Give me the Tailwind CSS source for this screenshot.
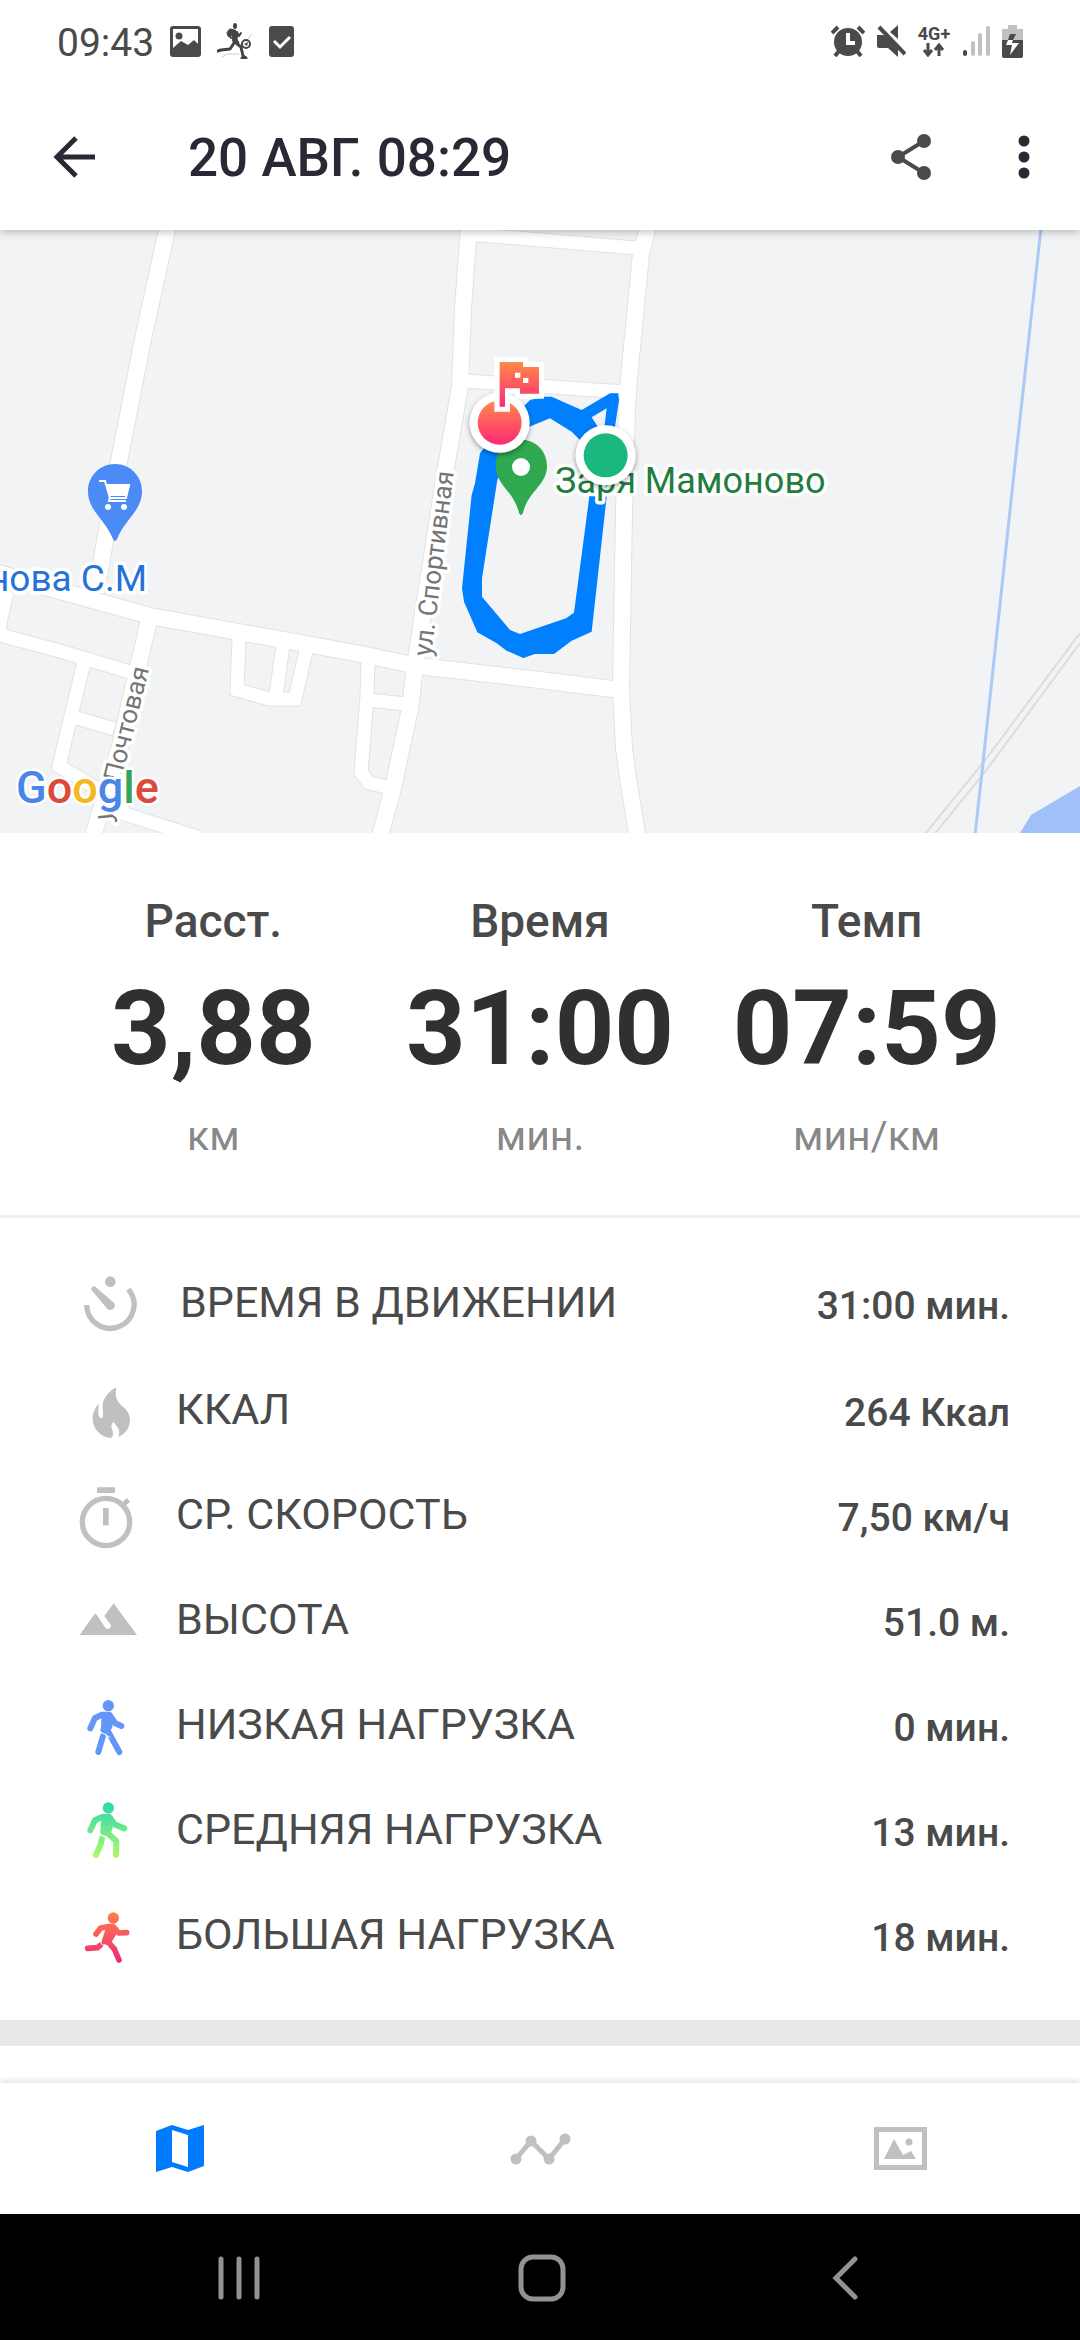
<!DOCTYPE html>
<html lang="ru">

<head>
  <meta charset="UTF-8" />
  <meta name="viewport" content="width=device-width, initial-scale=1.0" />
  <title>20 АВГ. 08:29</title>
  <script src="https://cdn.jsdelivr.net/npm/@tailwindcss/browser@4"></script>
</head>

<body class="min-h-screen flex flex-col bg-white text-[#4a4a4a] font-[Roboto,'Noto_Sans',sans-serif]">
  <!-- status bar -->
  <div class="relative z-20 bg-white h-20 pl-[57px] pr-[57px] pt-[2px] flex items-center justify-between">
    <div class="flex items-center gap-4">
      <span class="text-[39px] leading-10 mt-1">09:43</span>
      <svg class="w-[31px] h-[31px]" viewBox="0 0 31 31">
        <rect width="31" height="31" rx="3" fill="#4a4a4a" />
        <path d="M3 3H28V18L24 14L18 19L11 15L3 22Z" fill="#fff" />
        <circle cx="9" cy="10" r="3.5" fill="#4a4a4a" />
      </svg>
      <svg class="w-9 h-9" viewBox="0 0 36 36" fill="none" stroke="#444" stroke-linecap="round" stroke-linejoin="round">
        <path d="M5 34L10 31H22M31 16L35 11" stroke="#ccc" stroke-width="1" />
        <ellipse cx="18" cy="3" rx="2" ry="3" fill="#444" stroke="none" />
        <path d="M13 6L18 7L21 10L20 16L22 20L16 19L15 13L14 11L13 14L11 13L10 10Z" fill="#444" stroke-width="1" />
        <path d="M12 12L14 15M20 9L22 13L24 10" stroke-width="2" />
        <path d="M18 19L24 24L26 33L29 35H25" stroke-width="3" />
        <path d="M17 20L13 26L4 27L1 28" stroke-width="3" />
        <circle cx="29" cy="21" r="4" stroke-width="2" />
        <path d="M27 21L31 19L30 23Z" fill="#444" stroke="none" />
      </svg>
      <svg class="w-[26px] h-[31px]" viewBox="0 0 26 31">
        <rect width="25" height="31" rx="3" fill="#4a4a4a" />
        <path d="M5 15L11 21L21 11" fill="none" stroke="#fff" stroke-width="3" />
      </svg>
    </div>
    <div class="flex items-center gap-3">
      <svg class="w-[34px] h-8" viewBox="0 0 34 32" fill="none" stroke="#4a4a4a">
        <circle cx="17" cy="17" r="14" fill="#4a4a4a" stroke="none" />
        <path d="M1 8L7 2M33 8L27 2" stroke-width="4" />
        <path d="M4 31L8 26M30 31L26 26" stroke-width="4" />
        <path d="M17 8V18H24" stroke="#fff" stroke-width="4" />
      </svg>
      <svg class="w-[29px] h-8" viewBox="0 0 29 32">
        <path d="M0 10H6L10 11L21 22V32L11 23H2Q0 23 0 21ZM13 7L21 0V14Z" fill="#4a4a4a" />
        <path d="M2 2L28 29" stroke="#4a4a4a" stroke-width="4" />
      </svg>
      <div class="w-8 flex flex-col items-center">
        <span class="text-[18px] leading-[18px] font-bold">4G+</span>
        <svg class="w-6 h-[14px]" viewBox="0 0 24 14" fill="none" stroke="#4a4a4a" stroke-width="3">
          <path d="M6 0V12M2 7L6 12L10 7M17 13V2M13 7L17 2L21 7" />
        </svg>
      </div>
      <svg class="w-7 h-8" viewBox="0 0 28 32" fill="none" stroke-width="4" stroke-linecap="round">
        <path d="M3 27V29" stroke="#4a4a4a" />
        <path d="M11 18V29M18 10V29M26 3V29" stroke="#c0c0c0" />
      </svg>
      <svg class="w-[21px] h-[33px]" viewBox="0 0 21 33">
        <path d="M6 0H15V4H21V16H0V4H6Z" fill="#c0c0c0" />
        <path d="M0 15H21V31Q21 33 19 33H2Q0 33 0 31Z" fill="#4a4a4a" />
        <path d="M8 9H14L11 15H6Z" fill="#4a4a4a" />
        <path d="M6 15H11L10 18H17L8 30L10 20H4Z" fill="#fff" />
      </svg>
    </div>
  </div>

  <header
    class="relative z-10 h-[150px] pt-1 pl-[53px] pr-[50px] flex items-center bg-white text-[#2a2835] shadow-[0_2px_8px_rgba(0,0,0,0.25)]">
    <button aria-label="Назад">
      <svg class="w-[42px] h-[42px]" viewBox="0 0 42 42" fill="none" stroke="currentColor" stroke-width="5">
        <path d="M42 21H4M23 2L4 21L23 40" />
      </svg>
    </button>
    <h1 class="ml-[93px] pt-[2px] flex-1 text-[53px] leading-[60px] font-medium">20 АВГ. 08:29</h1>
    <button aria-label="Поделиться" class="mr-[87px] text-[#4a4a4a]">
      <svg class="w-10 h-[46px]" viewBox="0 0 40 46" fill="currentColor">
        <path d="M33 7L7 23L33 39" fill="none" stroke="currentColor" stroke-width="4" />
        <circle cx="7" cy="23" r="7" />
        <circle cx="33" cy="7" r="7" />
        <circle cx="33" cy="39" r="7" />
      </svg>
    </button>
    <button aria-label="Меню">
      <svg class="w-3 h-11" viewBox="0 0 12 44" fill="currentColor">
        <circle cx="6" cy="6" r="5.5" />
        <circle cx="6" cy="22" r="5.5" />
        <circle cx="6" cy="38" r="5.5" />
      </svg>
    </button>
  </header>

  <main class="flex-1">
    <svg class="block w-full bg-[#f1f3f4]" viewBox="0 0 1080 603" role="img" aria-label="Карта">
      <defs>
        <linearGradient id="hot" x1="0" y1="0" x2="0" y2="1">
          <stop offset="0" stop-color="#ff8a48" />
          <stop offset="1" stop-color="#fb2876" />
        </linearGradient>
        <filter id="drop" x="-30%" y="-30%" width="160%" height="160%">
          <feDropShadow dx="0" dy="6" stdDeviation="8" flood-opacity="0.4" />
        </filter>
        <g id="roads" fill="none">
          <path
            d="M168 -5L143 109L120 226L96 362M-5 342L60 361L150 386L361 424L418 436L540 450L620 460M150 386L138 437L120 516L90 616" />
          <path
            d="M469 -5L463 79L460 156L444 249L422 390L415 436L410 479L393 558L379 610M649 -8L641 24L629 148L627 179L624 281L621 459L624 518L628 548L638 610" />
        </g>
        <g id="lanes" fill="none">
          <path
            d="M7 362L0 392V405L60 421L130 442M84 432L59 536L118 571L125 584L200 608M77 488L114 499" />
          <path d="M239 409L237 460L269 469L295 469L306 421M283 415L276 466M368 432L367 467L361 542L369 553L391 558M370 470L405 474" />
          <path d="M468 4L636 18M465 151L625 162" />
        </g>
      </defs>

      <use href="#lanes" stroke="#e0e2e4" stroke-width="15" />
      <use href="#roads" stroke="#e0e2e4" stroke-width="18" />
      <use href="#lanes" stroke="#fff" stroke-width="13" />
      <use href="#roads" stroke="#fff" stroke-width="16" />

      <path d="M1080 403L983 533L925 604M1080 413L985 542L933 606" fill="none" stroke="#dcdcdc" stroke-width="2" />
      <path d="M1041 -2L1015 234L983 533L975 605" fill="none" stroke="#adc9f6" stroke-width="3" />
      <path d="M1080 556L1031 585L1020 603H1080Z" fill="#9fc0f8" />

      <g stroke="#fff" stroke-width="7" stroke-linejoin="round" paint-order="stroke">
        <text transform="translate(431 427) rotate(-83)" font-size="26" fill="#757575">ул. Спортивная</text>
        <text transform="translate(111 592) rotate(-76)" font-size="26" fill="#757575">ул. Почтовая</text>
        <text x="147" y="361" font-size="37" text-anchor="end" fill="#2573d9">нова С.М</text>
      </g>

      <path d="M115 234C99 234 88 247 88 261C88 281 105 289 113 309Q115 313 117 309C125 289 142 281 142 261C142 247 131 234 115 234Z"
        fill="#4c8bf5" />
      <path d="M99 251H105L110 268H126L129 255H107" fill="none" stroke="#fff" stroke-width="2" />
      <path d="M106 255H130L126 266H109Z" fill="#fff" />
      <path d="M110 267L109 271H126" fill="none" stroke="#fff" stroke-width="2" />
      <circle cx="108" cy="277" r="3" fill="#fff" />
      <circle cx="124" cy="277" r="3" fill="#fff" />

      <!-- route and its markers -->
      <svg x="400" y="100" width="300" height="350" viewBox="0 0 900 1050">
        <path fill="#0080ff" fill-rule="evenodd"
          d="M375 225L390 210L433 200H455L545 240L630 190H655L657 210L645 290L620 500L575 905L515 932L462 972H405L370 984L320 962L290 940L232 907L192 815L186 775L215 495L225 460L240 370L270 330ZM450 265L388 290L330 340L292 450L246 745V800L330 900L360 912L498 865L522 848L568 500L560 400L540 330L515 305ZM575 262L620 235L612 300H600Z" />
        <path
          d="M363 329C317 329 287 365 287 407C287 466 340 480 357 548Q363 562 369 548C386 480 441 466 441 407C441 365 409 329 363 329Z"
          fill="#2fa84f" />
        <circle cx="363" cy="411" r="27" fill="#fff" />
      </svg>
      <text x="555" y="263" font-size="36" fill="#1f7d40" stroke="#fff" stroke-width="7" stroke-linejoin="round"
        paint-order="stroke">Заря Мамоново</text>
      <svg x="400" y="100" width="300" height="350" viewBox="0 0 900 1050">
        <g filter="url(#drop)">
          <circle cx="299" cy="278" r="90" fill="#fff" />
          <circle cx="617" cy="376" r="90" fill="#fff" />
        </g>
        <circle cx="299" cy="278" r="66" fill="url(#hot)" />
        <circle cx="617" cy="376" r="66" fill="#1ab87f" />
        <path d="M283 82H384V97H432V206H345V190H330V245H283Z" fill="#fff" />
        <path d="M299 96H369V111H417V191H360V175H315V230H299Z" fill="url(#hot)" />
        <path d="M345 128H361V143H345ZM369 144H385V159H369Z" fill="#fff" />
      </svg>

      <text x="16" y="573" font-size="45" font-weight="500" stroke="#fff" stroke-width="5"
        paint-order="stroke"><tspan fill="#4a86e8">G</tspan><tspan fill="#db4a3c">o</tspan><tspan fill="#f2b91d">o</tspan><tspan
          fill="#4a86e8">g</tspan><tspan fill="#34a556">l</tspan><tspan fill="#db4a3c">e</tspan></text>
    </svg>

    <section class="grid grid-cols-3 px-[50px] pt-[58px] pb-[49px] text-center border-b-[3px] border-[#f0f0f0]">
      <div>
        <h2 class="text-[46px] leading-[60px] font-medium">Расст.</h2>
        <p class="h-[135px] pt-5 flex items-center justify-center text-[104px] leading-none font-bold text-[#303032]">3,88</p>
        <p class="pt-5 text-[41px] leading-[60px] text-[#888]">км</p>
      </div>
      <div>
        <h2 class="text-[46px] leading-[60px] font-medium">Время</h2>
        <p class="h-[135px] pt-5 flex items-center justify-center text-[104px] leading-none font-bold text-[#303032]">31:00</p>
        <p class="pt-5 text-[41px] leading-[60px] text-[#888]">мин.</p>
      </div>
      <div>
        <h2 class="text-[46px] leading-[60px] font-medium">Темп</h2>
        <p class="h-[135px] pt-5 flex items-center justify-center text-[104px] leading-none font-bold text-[#303032]">07:59</p>
        <p class="pt-5 text-[41px] leading-[60px] text-[#888]">мин/км</p>
      </div>
    </section>

    <dl class="pt-8 pb-8 text-[43px] leading-[60px] border-b-[26px] border-[#e8e8e8]">
      <div class="h-[108px] pl-20 pr-[70px] flex items-center gap-10">
        <svg class="w-[60px] h-[60px]" viewBox="0 0 180 180" fill="#c0c0c0">
          <circle cx="91" cy="23" r="16" />
          <path d="M46 38L102 86A14 14 0 0 1 82 105L34 47A8 8 0 0 1 46 38Z" />
          <path d="M20 93A71 71 0 1 0 145 46" fill="none" stroke="#c0c0c0" stroke-width="16" />
        </svg>
        <dt class="flex-1 pb-1">ВРЕМЯ В ДВИЖЕНИИ</dt>
        <dd class="pt-1 text-[39px] font-medium">31:00 мин.</dd>
      </div>
      <div class="h-[105px] pl-[76px] pr-[70px] flex items-center gap-10">
        <svg class="w-[60px] h-[60px]" viewBox="0 0 180 180" fill="#c0c0c0">
          <path
            d="M121 20C108 22 82 48 80 70C79 82 82 96 81 104C80 112 75 115 70 108C66 101 66 85 69 68C58 78 50 95 50 112C50 145 75 170 105 171C112 168 113 155 107 142C104 133 108 126 114 122C116 132 128 138 129 148C131 158 127 163 127 168C146 160 162 142 162 118C162 95 148 82 135 72C122 60 116 42 121 20Z" />
        </svg>
        <dt class="flex-1 pb-1">ККАЛ</dt>
        <dd class="pt-1 text-[39px] font-medium">264 Ккал</dd>
      </div>
      <div class="h-[105px] pl-[76px] pr-[70px] flex items-center gap-10">
        <svg class="w-[60px] h-[60px] overflow-visible" viewBox="0 0 180 180" fill="#c0c0c0">
          <circle cx="90" cy="108" r="71" fill="none" stroke="#c0c0c0" stroke-width="16" />
          <path d="M63 4H117V21H63ZM81 66H98V118H81Z" />
          <path d="M142 56L157 41" stroke="#c0c0c0" stroke-width="15" />
        </svg>
        <dt class="flex-1 pb-1">СР. СКОРОСТЬ</dt>
        <dd class="pt-1 text-[39px] font-medium">7,50 км/ч</dd>
      </div>
      <div class="h-[105px] pl-[76px] pr-[70px] flex items-center gap-10">
        <svg class="w-[60px] h-[60px] overflow-visible" viewBox="0 0 180 180" fill="#c0c0c0">
          <path d="M11 132L55 70Q58 67 61 70L88 110Q94 117 101 111Q107 106 104 101L85 75L113 37L183 132Z" />
        </svg>
        <dt class="flex-1 pb-1">ВЫСОТА</dt>
        <dd class="pt-1 text-[39px] font-medium">51.0 м.</dd>
      </div>
      <div class="h-[105px] pl-[76px] pr-[70px] flex items-center gap-10">
        <svg class="w-[60px] h-[60px]" viewBox="0 0 180 180" fill="none" stroke="#6496f8" stroke-width="18"
          stroke-linecap="round" stroke-linejoin="round">
          <circle cx="97" cy="29" r="17" fill="#6496f8" stroke="none" />
          <path d="M43 97L57 66L78 56H100L117 81L136 90M82 102L93 100L130 168M81 120L67 168" />
          <path d="M83 60H98L103 90L93 108L82 101Z" fill="#6496f8" stroke-width="14" />
          <path d="M72 107L102 124" stroke="#fff" stroke-width="3" />
        </svg>
        <dt class="flex-1 pb-1">НИЗКАЯ НАГРУЗКА</dt>
        <dd class="pt-1 text-[39px] font-medium">0 мин.</dd>
      </div>
      <div class="h-[105px] pl-[76px] pr-[70px] flex items-center gap-10">
        <svg class="w-[60px] h-[60px]" viewBox="0 0 180 180" fill="none" stroke="url(#medium)" stroke-width="18"
          stroke-linecap="round" stroke-linejoin="round">
          <defs>
            <linearGradient id="medium" gradientUnits="userSpaceOnUse" x1="0" y1="10" x2="0" y2="170">
              <stop offset="0" stop-color="#2fd8ae" />
              <stop offset="1" stop-color="#b0fa66" />
            </linearGradient>
          </defs>
          <circle cx="97" cy="21" r="17" fill="url(#medium)" stroke="none" />
          <path d="M43 88L57 58L78 48H100L117 71L145 82M82 92L95 97L121 120L120 162M78 112L74 130L60 162" />
          <path d="M83 52H98L103 82L95 98L80 94Z" fill="url(#medium)" stroke-width="14" />
          <path d="M66 98L98 115" stroke="#fff" stroke-width="3" />
        </svg>
        <dt class="flex-1 pb-1">СРЕДНЯЯ НАГРУЗКА</dt>
        <dd class="pt-1 text-[39px] font-medium">13 мин.</dd>
      </div>
      <div class="h-[105px] pl-[76px] pr-[70px] flex items-center gap-10">
        <svg class="w-[60px] h-[60px]" viewBox="0 0 180 180" fill="none" stroke="url(#high)" stroke-width="17"
          stroke-linecap="round" stroke-linejoin="round">
          <defs>
            <linearGradient id="high" gradientUnits="userSpaceOnUse" x1="0" y1="20" x2="0" y2="170">
              <stop offset="0" stop-color="#ff8045" />
              <stop offset="1" stop-color="#ee2a7b" />
            </linearGradient>
          </defs>
          <circle cx="112" cy="36" r="17" fill="url(#high)" stroke="none" />
          <path d="M60 84L74 66L95 62H112L128 81L152 80M86 106L98 110L115 129L129 162M74 117L64 125L35 127" />
          <path d="M97 64H112L115 82L98 110L84 105Z" fill="url(#high)" stroke-width="13" />
          <path d="M68 102L84 122" stroke="#fff" stroke-width="3" />
        </svg>
        <dt class="flex-1 pb-1">БОЛЬШАЯ НАГРУЗКА</dt>
        <dd class="pt-1 text-[39px] font-medium">18 мин.</dd>
      </div>
    </dl>
  </main>

  <nav class="h-[131px] grid grid-cols-3 bg-white text-[#c0c0c0] shadow-[0_-2px_6px_rgba(0,0,0,0.12)]">
    <button aria-label="Карта" class="flex items-center justify-center text-[#007bff]">
      <svg class="w-12 h-12" viewBox="0 0 48 48" fill="currentColor">
        <path fill-rule="evenodd" d="M0 6L16 0L32 5L48 0V41L32 47L16 42L0 47ZM16 5V37L32 42V10Z" />
      </svg>
    </button>
    <button aria-label="График" class="flex items-center justify-center">
      <svg class="w-[61px] h-8" viewBox="0 0 61 32" fill="currentColor">
        <path d="M6 26L21 8L39 26L55 6" fill="none" stroke="currentColor" stroke-width="5" />
        <circle cx="6" cy="26" r="5.5" />
        <circle cx="21" cy="8" r="5.5" />
        <circle cx="39" cy="26" r="5.5" />
        <circle cx="55" cy="6" r="5.5" />
      </svg>
    </button>
    <button aria-label="Фото" class="flex items-center justify-center">
      <svg class="w-[53px] h-11" viewBox="0 0 53 44" fill="currentColor">
        <rect x="2.5" y="2.5" width="48" height="38" fill="none" stroke="currentColor" stroke-width="5" />
        <path d="M10 32L20 12L29 28L37 24L42 32Z" />
        <circle cx="35" cy="15" r="3.5" />
      </svg>
    </button>
  </nav>

  <div class="relative h-[126px] pl-[88px] pr-[84px] pt-[2px] grid grid-cols-3 bg-black text-[#929292]">
    <button aria-label="Недавние" class="flex items-center justify-center">
      <svg class="w-[42px] h-11" viewBox="0 0 42 44" stroke="currentColor" stroke-width="5" stroke-linecap="round">
        <path d="M3 3V41M21 3V41M39 3V41" />
      </svg>
    </button>
    <button aria-label="Домой" class="flex items-center justify-center">
      <svg class="w-12 h-12" viewBox="0 0 48 48" fill="none" stroke="currentColor" stroke-width="5">
        <rect x="3" y="3" width="42" height="42" rx="12" />
      </svg>
    </button>
    <button aria-label="Назад" class="flex items-center justify-center">
      <svg class="w-[26px] h-11" viewBox="0 0 26 44" fill="none" stroke="currentColor" stroke-width="5"
        stroke-linecap="round">
        <path d="M23 3L4 22L23 41" />
      </svg>
    </button>
  </div>
</body>

</html>
